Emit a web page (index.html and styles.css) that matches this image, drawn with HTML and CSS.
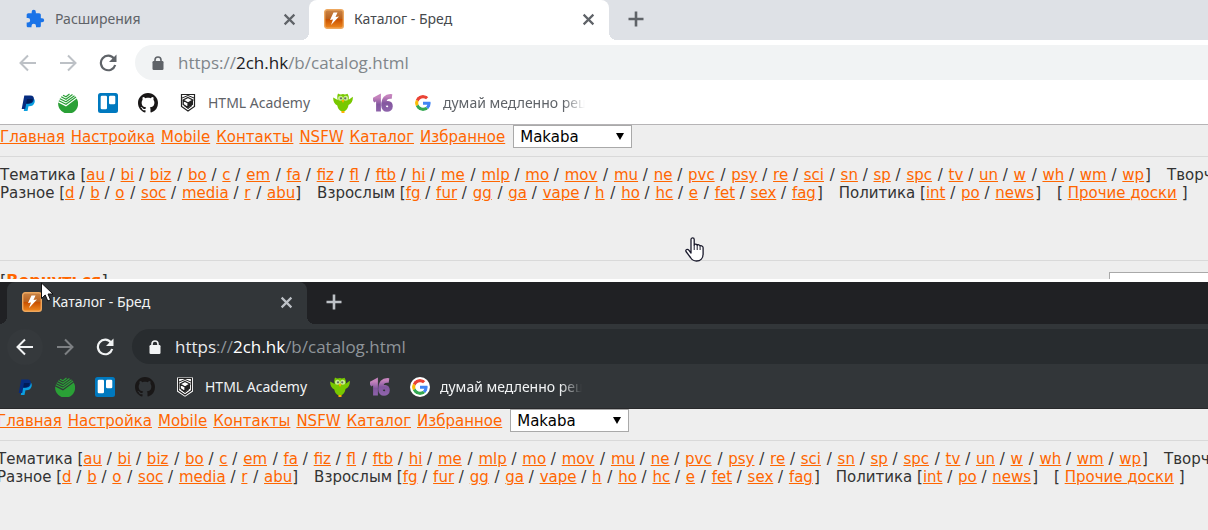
FILE: index.html
```html
<!DOCTYPE html>
<html lang="ru">
<head>
  <meta charset="UTF-8">
  <meta name="viewport" content="width=device-width, initial-scale=1.0">
  <title>Каталог - Бред</title>
  <link rel="stylesheet" href="styles.css">
</head>
<body>

  <!-- icons -->
  <svg class="sprite" aria-hidden="true">
    <defs>
      <linearGradient id="orange" x1="0" y1="0" x2="0" y2="1">
        <stop offset="0" stop-color="#c98548"/>
        <stop offset="0.5" stop-color="#b9601c"/>
        <stop offset="0.52" stop-color="#c85000"/>
        <stop offset="1" stop-color="#f08a20"/>
      </linearGradient>
      <linearGradient id="purple" x1="0" y1="0" x2="0" y2="1">
        <stop offset="0" stop-color="#c583bd"/>
        <stop offset="0.5" stop-color="#83579f"/>
        <stop offset="1" stop-color="#8d62aa"/>
      </linearGradient>
    </defs>
    <symbol id="puzzle" viewBox="0 0 24 24"><path fill="#1a73e8" d="M20.5 11H19V7c0-1.100-.9-2-2-2h-4V3.500a2.500 2.500 0 0 0-5 0V5H4c-1.100 0-2 .9-2 2v3.800h1.500a2.700 2.700 0 0 1 0 5.400H2V20c0 1.100.9 2 2 2h3.800v-1.500a2.700 2.700 0 0 1 5.400 0V22H17c1.100 0 2-.9 2-2v-4h1.500a2.500 2.500 0 0 0 0-5z"/></symbol>
    <symbol id="bolt" viewBox="0 0 20 20"><rect x=".7" y=".7" width="18.600" height="18.600" rx="2.500" fill="url(#orange)" stroke="#eda75e" stroke-width="1.400"/><path fill="#fff" d="M9.500 3.500h4L11.500 8l3.500-.5-8 8.500 2-5.500-3 .6z"/></symbol>
    <symbol id="close" viewBox="0 0 12 12"><path d="M1.500 1.500l9 9M10.500 1.500l-9 9" fill="none" stroke="currentColor" stroke-width="2"/></symbol>
    <symbol id="plus" viewBox="0 0 16 16"><path d="M8 .5v15M.5 8h15" fill="none" stroke="currentColor" stroke-width="2.600"/></symbol>
    <symbol id="back" viewBox="0 0 18 18"><path d="M17 9H2M9 1.500L1.500 9 9 16.500" fill="none" stroke="currentColor" stroke-width="2"/></symbol>
    <symbol id="forward" viewBox="0 0 18 18"><path d="M1 9h15M9 1.500L16.500 9 9 16.500" fill="none" stroke="currentColor" stroke-width="2"/></symbol>
    <symbol id="reload" viewBox="0 0 18 18"><path d="M15 4.500A7.300 7.300 0 1 0 16.200 11" fill="none" stroke="currentColor" stroke-width="2.200"/><path fill="currentColor" d="M17.500 .5v7.500H10z"/></symbol>
    <symbol id="lock" viewBox="0 0 12 14"><rect x=".5" y="5" width="11" height="9" rx="1.200" fill="currentColor"/><path d="M3 6V4a3 3 0 0 1 6 0v2" fill="none" stroke="currentColor" stroke-width="1.600"/></symbol>
    <symbol id="paypal" viewBox="0 0 20 20"><path fill="#0a9fe0" d="M8 5h6.500c2.300.7 2.700 2.500 2 4.700-.8 2.700-3 3.700-6 3.500L9.500 18H5.800z"/><path fill="#062c80" d="M6.300 2.500h6c3 0 4 1.800 3.500 4.300-.6 3-2.800 4-5.800 4H8.200L7.200 16H3.700z"/><path fill="#001c58" d="M9 6h5.800c-.4 3-2.500 4.300-5 4.500H8.200z"/></symbol>
    <symbol id="sber" viewBox="0 0 20 20"><path fill="#2aa036" d="M.2 9.500L8 13.500 18.700 5.500A10 10 0 1 1 .2 9.500z"/><path fill="none" stroke="#2aa036" stroke-width="1.200" d="M.8 7.700L8 11.300 18 4M1.800 5.700L8 8.800 16.500 2.700M3.200 3.700L8 6.300 14.500 1.500M5 2.200l3 1.500L11.500 1"/></symbol>
    <symbol id="trello" viewBox="0 0 20 20"><rect width="20" height="20" rx="2.500" fill="#0079bf"/><rect x="2.700" y="2.700" width="6.300" height="13.600" rx="1.300" fill="#fff"/><rect x="11" y="2.700" width="6.300" height="8.500" rx="1.300" fill="#fff"/></symbol>
    <symbol id="github" viewBox="0 0 16 16"><path fill="#191717" d="M8 0C3.580 0 0 3.580 0 8c0 3.540 2.290 6.530 5.470 7.590.4.070.55-.17.55-.38 0-.19-.01-.82-.01-1.490-2.010.37-2.530-.49-2.690-.94-.09-.23-.48-.94-.82-1.130-.28-.15-.68-.52-.01-.53.63-.01 1.080.58 1.230.82.72 1.210 1.870.87 2.330.66.07-.52.28-.87.51-1.070-1.780-.2-3.640-.89-3.640-3.950 0-.87.31-1.590.82-2.150-.08-.2-.36-1.020.08-2.120 0 0 .67-.21 2.200.82.64-.18 1.320-.27 2-.27s1.360.09 2 .27c1.530-1.040 2.200-.82 2.200-.82.44 1.100.16 1.920.08 2.120.51.56.82 1.270.82 2.150 0 3.070-1.870 3.750-3.650 3.950.29.25.54.73.54 1.480 0 1.070-.01 1.930-.01 2.200 0 .21.15.46.55.38A8.010 8.010 0 0 0 16 8c0-4.420-3.580-8-8-8z"/></symbol>
    <symbol id="academy" viewBox="0 0 20 20"><path fill="#fff" stroke="#fff" stroke-width="2" d="M3 1.500h14v12.500L10 18.500 3 14z"/><path fill="#fff" stroke="#222" stroke-width="1.200" d="M3.500 1.500h13v12L10 18l-6.500-4.500z"/><path fill="none" stroke="#222" d="M4 5l6-2.500L16 5M6 12.500l4 3 4-3"/><path fill="#fff" stroke="#222" stroke-width="1.300" d="M10 4.500l4.800 2.500-4.800 3-4.800-3zM5.200 7v4.500L10 14.500V10"/><path fill="#222" d="M10 10l5-3v4.800l-5 3z"/></symbol>
    <symbol id="owl" viewBox="0 0 20 20"><path fill="#78c800" d="M5 .5c1.500 1 3 1.200 5 .6 1.500.5 3 .4 4.500-.4 1.500 2.300 1.600 4.300 1.200 6L19.800 3.800c.3 3.500-.8 6.700-4.300 8.200-.5 3.500-2.500 6.500-5.500 6.500s-5-2.500-5.700-6C1.300 11 0 8 .2 4.500L4.700 7C4.200 5 4 2.800 5 .5z"/><circle cx="7.500" cy="5.200" r="2.500" fill="#c9ef8e"/><circle cx="12.700" cy="5.200" r="2.500" fill="#c9ef8e"/><circle cx="8" cy="5.300" r="1.100" fill="#666"/><circle cx="12.200" cy="5.300" r="1.100" fill="#666"/><path fill="#ffb100" d="M8.500 7h3L10 10zM8.500 18h3v2h-3z"/></symbol>
    <symbol id="sixteen" viewBox="0 0 20 20"><path fill="none" stroke="url(#purple)" stroke-width="4.800" d="M0 7.500L5.500 4.500v14"/><path fill="none" stroke="url(#purple)" stroke-width="4.600" d="M19 3.500c-6-.8-8.500 2.500-8.500 9 0 5.500 7 5 7 .8 0-3.800-5-3.800-6-1.300"/></symbol>
    <symbol id="google" viewBox="0 0 48 48"><path fill="#ea4335" d="M24 9.500c3.540 0 6.710 1.220 9.210 3.600l6.850-6.850C35.900 2.380 30.470 0 24 0 14.620 0 6.510 5.380 2.560 13.220l7.980 6.190C12.430 13.720 17.740 9.500 24 9.500z"/><path fill="#4285f4" d="M46.980 24.550c0-1.570-.15-3.090-.38-4.550H24v9.020h12.940c-.58 2.960-2.260 5.480-4.780 7.180l7.730 6c4.510-4.180 7.090-10.360 7.090-17.650z"/><path fill="#fbbc05" d="M10.530 28.590c-.48-1.450-.76-2.990-.76-4.590s.27-3.140.76-4.590l-7.980-6.190C.92 16.460 0 20.120 0 24c0 3.880.92 7.540 2.560 10.780l7.970-6.190z"/><path fill="#34a853" d="M24 48c6.480 0 11.930-2.130 15.890-5.810l-7.730-6c-2.150 1.450-4.920 2.300-8.160 2.300-6.260 0-11.570-4.220-13.470-9.910l-7.980 6.190C6.510 42.620 14.620 48 24 48z"/></symbol>
  </svg>

  <section class="browser light">
    <div class="tabs">
      <div class="tab">
        <svg class="favicon"><use href="#puzzle"/></svg>
        <span class="tab-title">Расширения</span>
        <button class="tab-close" aria-label="Закрыть"><svg><use href="#close"/></svg></button>
      </div>
      <div class="tab active">
        <svg class="favicon"><use href="#bolt"/></svg>
        <span class="tab-title">Каталог - Бред</span>
        <button class="tab-close" aria-label="Закрыть"><svg><use href="#close"/></svg></button>
      </div>
      <button class="new-tab" aria-label="Новая вкладка"><svg><use href="#plus"/></svg></button>
    </div>
    <div class="toolbar">
      <button class="tool off" aria-label="Назад"><svg><use href="#back"/></svg></button>
      <button class="tool off" aria-label="Вперед"><svg><use href="#forward"/></svg></button>
      <button class="tool" aria-label="Обновить"><svg><use href="#reload"/></svg></button>
      <div class="omnibox">
        <svg class="lock"><use href="#lock"/></svg>
        <div class="url" role="textbox" contenteditable="true" spellcheck="false" aria-label="Адрес"><span class="scheme">https</span>://<b>2ch.hk</b>/b/catalog.html</div>
      </div>
    </div>
    <div class="bookmarks">
      <a href="#" aria-label="PayPal"><svg><use href="#paypal"/></svg></a>
      <a href="#" aria-label="Сбербанк"><svg><use href="#sber"/></svg></a>
      <a href="#" aria-label="Trello"><svg><use href="#trello"/></svg></a>
      <a href="#" aria-label="GitHub"><svg><use href="#github"/></svg></a>
      <a href="#" class="named"><svg><use href="#academy"/></svg><span>HTML Academy</span></a>
      <a href="#" aria-label="Duolingo"><svg><use href="#owl"/></svg></a>
      <a href="#" aria-label="16"><svg><use href="#sixteen"/></svg></a>
      <a href="#"><svg class="google"><use href="#google"/></svg><span class="fade">думай медленно решай</span></a>
    </div>
    <div class="page">
      <div class="menu">
        <a href="#">Главная</a>
        <a href="#">Настройка</a>
        <a href="#">Mobile</a>
        <a href="#">Контакты</a>
        <a href="#">NSFW</a>
        <a href="#">Каталог</a>
        <a href="#">Избранное</a>
        <span class="select"><select aria-label="Стиль"><option>Makaba</option></select></span>
      </div>
      <div class="boards">
        <div class="row">
          <span>Тематика [<a href="#">au</a> / <a href="#">bi</a> / <a href="#">biz</a> / <a href="#">bo</a> / <a href="#">c</a> / <a href="#">em</a> / <a href="#">fa</a> / <a href="#">fiz</a> / <a href="#">fl</a> / <a href="#">ftb</a> / <a href="#">hi</a> / <a href="#">me</a> / <a href="#">mlp</a> / <a href="#">mo</a> / <a href="#">mov</a> / <a href="#">mu</a> / <a href="#">ne</a> / <a href="#">pvc</a> / <a href="#">psy</a> / <a href="#">re</a> / <a href="#">sci</a> / <a href="#">sn</a> / <a href="#">sp</a> / <a href="#">spc</a> / <a href="#">tv</a> / <a href="#">un</a> / <a href="#">w</a> / <a href="#">wh</a> / <a href="#">wm</a> / <a href="#">wp</a>]</span>
          <span>Творчество</span>
        </div>
        <div class="row">
          <span>Разное [<a href="#">d</a> / <a href="#">b</a> / <a href="#">o</a> / <a href="#">soc</a> / <a href="#">media</a> / <a href="#">r</a> / <a href="#">abu</a>]</span>
          <span>Взрослым [<a href="#">fg</a> / <a href="#">fur</a> / <a href="#">gg</a> / <a href="#">ga</a> / <a href="#">vape</a> / <a href="#">h</a> / <a href="#">ho</a> / <a href="#">hc</a> / <a href="#">e</a> / <a href="#">fet</a> / <a href="#">sex</a> / <a href="#">fag</a>]</span>
          <span>Политика [<a href="#">int</a> / <a href="#">po</a> / <a href="#">news</a>]</span>
          <span>[ <a href="#">Прочие доски</a> ]</span>
        </div>
      </div>
      <div class="catalog-bar">
        <span>[<a href="#">Вернуться</a>]</span>
        <input class="search" type="text" aria-label="Поиск">
      </div>
      <svg class="hand" viewBox="0 0 20 25"><path fill="#fff" stroke="#1a1a2c" stroke-width="1.300" stroke-linejoin="round" d="M6 16V2.500a1.600 1.600 0 0 1 3.200 0V8c.5-1.200 2.800-1.100 3 .3.700-1 2.700-.7 2.900.8 1-.8 3 0 3 1.700V17c0 4-2.500 7-6.600 7-3 0-4.500-1-6-3.500L1 14.500c-.8-1.800 1.500-3 2.800-1.300z"/><path stroke="#1a1a2c" d="M9.200 8v5M12.200 8.500V13M15.100 9.500V13"/></svg>
    </div>
  </section>

  <section class="browser dark">
    <div class="tabs">
      <div class="tab active">
        <svg class="favicon"><use href="#bolt"/></svg>
        <span class="tab-title">Каталог - Бред</span>
        <button class="tab-close" aria-label="Закрыть"><svg><use href="#close"/></svg></button>
      </div>
      <button class="new-tab" aria-label="Новая вкладка"><svg><use href="#plus"/></svg></button>
    </div>
    <div class="toolbar">
      <button class="tool hover" aria-label="Назад"><svg><use href="#back"/></svg></button>
      <button class="tool off" aria-label="Вперед"><svg><use href="#forward"/></svg></button>
      <button class="tool" aria-label="Обновить"><svg><use href="#reload"/></svg></button>
      <div class="omnibox">
        <svg class="lock"><use href="#lock"/></svg>
        <div class="url" role="textbox" contenteditable="true" spellcheck="false" aria-label="Адрес"><span class="scheme">https</span>://<b>2ch.hk</b>/b/catalog.html</div>
      </div>
    </div>
    <div class="bookmarks">
      <a href="#" aria-label="PayPal"><svg><use href="#paypal"/></svg></a>
      <a href="#" aria-label="Сбербанк"><svg><use href="#sber"/></svg></a>
      <a href="#" aria-label="Trello"><svg><use href="#trello"/></svg></a>
      <a href="#" aria-label="GitHub"><svg><use href="#github"/></svg></a>
      <a href="#" class="named"><svg><use href="#academy"/></svg><span>HTML Academy</span></a>
      <a href="#" aria-label="Duolingo"><svg><use href="#owl"/></svg></a>
      <a href="#" aria-label="16"><svg><use href="#sixteen"/></svg></a>
      <a href="#"><svg class="google"><use href="#google"/></svg><span class="fade">думай медленно решай</span></a>
    </div>
    <div class="page">
      <div class="menu">
        <a href="#">Главная</a>
        <a href="#">Настройка</a>
        <a href="#">Mobile</a>
        <a href="#">Контакты</a>
        <a href="#">NSFW</a>
        <a href="#">Каталог</a>
        <a href="#">Избранное</a>
        <span class="select"><select aria-label="Стиль"><option>Makaba</option></select></span>
      </div>
      <div class="boards">
        <div class="row">
          <span>Тематика [<a href="#">au</a> / <a href="#">bi</a> / <a href="#">biz</a> / <a href="#">bo</a> / <a href="#">c</a> / <a href="#">em</a> / <a href="#">fa</a> / <a href="#">fiz</a> / <a href="#">fl</a> / <a href="#">ftb</a> / <a href="#">hi</a> / <a href="#">me</a> / <a href="#">mlp</a> / <a href="#">mo</a> / <a href="#">mov</a> / <a href="#">mu</a> / <a href="#">ne</a> / <a href="#">pvc</a> / <a href="#">psy</a> / <a href="#">re</a> / <a href="#">sci</a> / <a href="#">sn</a> / <a href="#">sp</a> / <a href="#">spc</a> / <a href="#">tv</a> / <a href="#">un</a> / <a href="#">w</a> / <a href="#">wh</a> / <a href="#">wm</a> / <a href="#">wp</a>]</span>
          <span>Творчество</span>
        </div>
        <div class="row">
          <span>Разное [<a href="#">d</a> / <a href="#">b</a> / <a href="#">o</a> / <a href="#">soc</a> / <a href="#">media</a> / <a href="#">r</a> / <a href="#">abu</a>]</span>
          <span>Взрослым [<a href="#">fg</a> / <a href="#">fur</a> / <a href="#">gg</a> / <a href="#">ga</a> / <a href="#">vape</a> / <a href="#">h</a> / <a href="#">ho</a> / <a href="#">hc</a> / <a href="#">e</a> / <a href="#">fet</a> / <a href="#">sex</a> / <a href="#">fag</a>]</span>
          <span>Политика [<a href="#">int</a> / <a href="#">po</a> / <a href="#">news</a>]</span>
          <span>[ <a href="#">Прочие доски</a> ]</span>
        </div>
      </div>
    </div>
    <svg class="arrow" viewBox="0 0 13 20"><path fill="#fff" stroke="#111" d="M.5 1v15.500l3.700-3.500 2.600 6 2.700-1.200L7 12h5z"/></svg>
  </section>

</body>
</html>
```

FILE: styles.css
```css
body {
  margin: 0;
  min-height: 100vh;
  display: flex;
  flex-direction: column;
  gap: 3px;
  background: #fff;
  overflow: hidden;
}
.sprite {
  position: absolute;
  width: 0;
  height: 0;
}
button {
  padding: 0;
  border: none;
  background: none;
  color: inherit;
}
svg {
  display: block;
  flex: none;
}
.browser {
  position: relative;
  font-family: "Noto Sans", sans-serif;
  font-size: 14px;
  color: var(--text);
  background: var(--bar);
}
.light {
  --bar: #fff;
  --strip: #dee1e6;
  --box: #f1f3f4;
  --text: #5f6368;
  --title: #45494d;
  --icon: #5f6368;
  --off: #bdc1c6;
  --scheme: #80868b;
  --muted: #80868b;
  --host: #202124;
  --line: #b6b4b6;
}
.dark {
  --bar: #323639;
  --strip: #202124;
  --box: #282c2f;
  --text: #f1f3f4;
  --title: #f1f3f4;
  --icon: #f1f3f4;
  --off: #7d8083;
  --scheme: #e8eaed;
  --muted: #8f959a;
  --host: #fff;
  --line: #28292b;
  flex: 1;
  display: flex;
  flex-direction: column;
}

/* tabs */
.tabs {
  display: flex;
  height: 40px;
  background: var(--strip);
}
.dark .tabs {
  height: 42px;
  padding-left: 7px;
}
.tab {
  position: relative;
  display: flex;
  align-items: center;
  box-sizing: border-box;
  width: 300px;
  padding: 0 14px 2px 15px;
}
.light .tab:first-child {
  width: 309px;
  padding-left: 25px;
  padding-right: 13px;
}
.tab.active {
  background: var(--bar);
  border-radius: 8px 8px 0 0;
  color: var(--title);
}
.tab.active::before,
.tab.active::after {
  content: "";
  position: absolute;
  bottom: 0;
  width: 8px;
  height: 8px;
}
.tab.active::before {
  right: 100%;
  background: radial-gradient(circle at 0 0, transparent 8px, var(--bar) 8px);
}
.tab.active::after {
  left: 100%;
  background: radial-gradient(circle at 100% 0, transparent 8px, var(--bar) 8px);
}
.favicon {
  width: 20px;
  height: 20px;
}
.tab-title {
  flex: 1;
  padding: 0 0 1px 10px;
}
.tab-close svg {
  width: 13px;
  height: 13px;
}
.dark .tab-close,
.dark .new-tab {
  color: #bdc1c6;
}
.light .tab-close {
  color: var(--icon);
}
.new-tab {
  padding: 0 0 2px 19px;
}
.new-tab svg {
  width: 16px;
  height: 16px;
}

/* toolbar */
.toolbar {
  display: flex;
  align-items: center;
  height: 45px;
  padding-left: 10px;
}
.dark .toolbar {
  padding-left: 7px;
}
.tool {
  display: flex;
  align-items: center;
  justify-content: center;
  width: 36px;
  height: 36px;
  margin-right: 4px;
  border-radius: 50%;
  color: var(--icon);
}
.tool.off {
  color: var(--off);
}
.tool.hover {
  background: #35393c;
}
.tool svg {
  width: 18px;
  height: 18px;
}
.omnibox {
  flex: 1;
  display: flex;
  align-items: center;
  gap: 14px;
  height: 35px;
  margin-left: 5px;
  padding-left: 17px;
  border-radius: 18px 0 0 18px;
  background: var(--box);
}
.lock {
  width: 12px;
  height: 14px;
  color: var(--icon);
}
.url {
  font-family: "Open Sans", sans-serif;
  font-size: 17px;
  color: var(--muted);
  white-space: nowrap;
}
.url b {
  font-weight: normal;
  color: var(--host);
}
.scheme {
  color: var(--scheme);
}

/* bookmarks */
.bookmarks {
  display: flex;
  align-items: center;
  gap: 20px;
  height: 36px;
  padding: 0 0 3px 18px;
  border-bottom: 1px solid var(--line);
}
.dark .bookmarks {
  padding-left: 15px;
}
.bookmarks a {
  display: flex;
  align-items: center;
  gap: 10px;
  color: inherit;
  text-decoration: none;
  white-space: nowrap;
}
.bookmarks .named {
  min-width: 135px;
}
.bookmarks span {
  padding-bottom: 1px;
}
.bookmarks svg {
  width: 20px;
  height: 20px;
}
.bookmarks .google {
  box-sizing: border-box;
  padding: 2px;
  border-radius: 50%;
  background: #fff;
}
.fade {
  width: 142px;
  overflow: hidden;
  -webkit-mask-image: linear-gradient(90deg, #000 120px, transparent 142px);
  mask-image: linear-gradient(90deg, #000 120px, transparent 142px);
}

/* page */
.page {
  position: relative;
  background: #eee;
  color: #333;
  font-family: "DejaVu Sans", sans-serif;
  font-size: 15px;
  line-height: 18px;
  white-space: nowrap;
  overflow: hidden;
}
.light .page {
  height: 154px;
}
.dark .page {
  flex: 1;
}
.dark .menu,
.dark .boards {
  margin-left: -3px;
}
.page a {
  color: #f60;
}
.menu {
  display: flex;
  align-items: center;
  gap: 6px;
  height: 31px;
  border-bottom: 1px solid #d9d9d9;
}
.menu > * {
  margin-bottom: 8px;
}
.select {
  position: relative;
  margin-left: 2px;
}
.select select {
  display: block;
  appearance: none;
  box-sizing: border-box;
  width: 119px;
  height: 23px;
  padding: 0 6px;
  border: 1px solid #a9a9a9;
  border-radius: 0;
  background: #fff;
  color: #000;
  font: inherit;
}
.select::after {
  content: "";
  position: absolute;
  top: 8px;
  right: 8px;
  border: 4px solid transparent;
  border-top: 7px solid #000;
  border-bottom: none;
}
.boards {
  height: 94px;
  padding-top: 9px;
}
.light .boards {
  border-bottom: 1px solid #d9d9d9;
}
.row {
  display: flex;
  gap: 16px;
}
.row a + a {
  margin-left: 1px;
}
.row a:nth-child(3n) {
  margin-right: 1px;
}
.catalog-bar {
  display: flex;
  justify-content: space-between;
  padding-top: 11px;
  font-size: 16px;
}
.catalog-bar a {
  font-weight: bold;
}
.search {
  box-sizing: border-box;
  width: 99px;
  height: 24px;
  border: 1px solid #a9a9a9;
  border-right: none;
}
.hand {
  position: absolute;
  left: 685px;
  top: 112px;
  width: 20px;
  height: 25px;
}
.arrow {
  position: absolute;
  left: 41px;
  top: 0;
  width: 13px;
  height: 20px;
}
```
